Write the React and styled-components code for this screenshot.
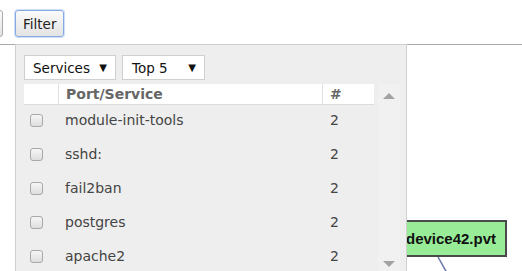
import React from "react";
import styled, { createGlobalStyle } from "styled-components";

const Global = createGlobalStyle`
  html, body { margin: 0; padding: 0; background: #fff; }
  body { font-family: "DejaVu Sans", Verdana, sans-serif; }
  * { box-sizing: border-box; }
`;

const Page = styled.div`
  position: relative;
  width: 522px;
  height: 271px;
  overflow: hidden;
`;

const Toolbar = styled.div`
  display: flex;
  align-items: flex-start;
  gap: 12px;
  height: 45px;
  padding-top: 10px;
  border-bottom: 1px solid #a9a9a9;
`;

const Button = styled.button`
  height: 27px;
  padding: 0 7px;
  font-family: "DejaVu Sans", Verdana, sans-serif;
  font-size: 13.5px;
  color: #222;
  border-radius: 3px;
  background: linear-gradient(#fbfbfb, #e3e3e3);
  border: 1px solid ${(p) => (p.$focused ? "#86a9e3" : "#a9a9a9")};
  box-shadow: ${(p) => (p.$focused ? "0 0 0 1px rgba(150,185,240,0.45)" : "none")};
  margin-left: ${(p) => (p.$clipped ? "-40px" : "0")};
  width: ${(p) => (p.$clipped ? "43px" : "auto")};
`;

const Canvas = styled.div`
  position: absolute;
  inset: 45px 0 0 0;
`;

const Node = styled.div`
  position: absolute;
  left: 395px;
  top: 175px;
  width: 112px;
  height: 37px;
  display: flex;
  align-items: center;
  justify-content: center;
  background: #98ec98;
  border: 2px solid #4a4a4a;
  font-family: "Liberation Sans", Arial, sans-serif;
  font-weight: bold;
  font-size: 15px;
  color: #111;
`;

const Edge = styled.svg`
  position: absolute;
  left: 430px;
  top: 212px;
`;

const Panel = styled.div`
  position: absolute;
  left: 15px;
  top: 44px;
  width: 392px;
  height: 240px;
  background: #eeeeee;
  border: 1px solid #cfcfcf;
  padding: 10px 8px 0;
  display: flex;
  flex-direction: column;
  gap: 4px;
`;

const Selects = styled.div`
  display: flex;
  gap: 6px;
`;

const Select = styled.div`
  width: ${(p) => p.$w}px;
  height: 25px;
  background: #fff;
  border: 1px solid #cfcfcf;
  display: flex;
  align-items: center;
  justify-content: space-between;
  padding: 0 8px 0 ${(p) => p.$pl}px;
  font-size: 13.5px;
  color: #111;
`;

const Caret = styled.span`
  font-size: 10px;
  color: #111;
`;

const TableWrap = styled.div`
  display: grid;
  grid-template-columns: 350px 22px;
  gap: 4px;
`;

const Table = styled.div`
  display: flex;
  flex-direction: column;
`;

const cols = "34px 264px 52px";

const Header = styled.div`
  display: grid;
  grid-template-columns: ${cols};
  height: 21px;
  background: #fff;
  border-bottom: 1px solid #dcdcdc;
`;

const HeadCell = styled.div`
  display: flex;
  align-items: center;
  padding-left: 7px;
  font-weight: bold;
  font-size: 14px;
  color: #666;
  border-left: ${(p) => (p.$first ? "none" : "1px solid #e2e2e2")};
`;

const Row = styled.div`
  display: grid;
  grid-template-columns: ${cols};
  height: 34px;
  align-items: center;
  padding-bottom: 4px;
`;

const Check = styled.span`
  width: 13px;
  height: 13px;
  margin-left: 6px;
  border: 1px solid #a8a8a8;
  border-radius: 3px;
  background: linear-gradient(#f6f6f6, #dedede);
`;

const Cell = styled.div`
  padding-left: ${(p) => p.$pl}px;
  font-size: 14px;
  color: #444;
`;

const Scrollbar = styled.div`
  background: #f1f1f1;
  height: 200px;
  position: relative;
`;

const Arrow = styled.span`
  position: absolute;
  left: 5px;
  ${(p) => (p.$down ? "top: 177px;" : "top: 9px;")}
  width: 0;
  height: 0;
  border-left: 6px solid transparent;
  border-right: 6px solid transparent;
  ${(p) =>
    p.$down ? "border-top: 6px solid #a3a3a3;" : "border-bottom: 6px solid #a3a3a3;"}
`;

const rows = ["module-init-tools", "sshd:", "fail2ban", "postgres", "apache2"];

export default function App() {
  return (
    <Page>
      <Global />
      <Toolbar>
        <Button $clipped> </Button>
        <Button $focused>Filter</Button>
      </Toolbar>
      <Canvas>
        <Edge width="30" height="30" viewBox="0 0 30 30">
          <line x1="8" y1="0" x2="17" y2="16" stroke="#6a78aa" strokeWidth="1.5" />
        </Edge>
        <Node>device42.pvt</Node>
      </Canvas>
      <Panel>
        <Selects>
          <Select $w={92} $pl={8}>
            Services <Caret>▼</Caret>
          </Select>
          <Select $w={83} $pl={9}>
            Top 5 <Caret>▼</Caret>
          </Select>
        </Selects>
        <TableWrap>
          <Table>
            <Header>
              <HeadCell $first />
              <HeadCell>Port/Service</HeadCell>
              <HeadCell>#</HeadCell>
            </Header>
            {rows.map((r) => (
              <Row key={r}>
                <Check />
                <Cell $pl={7}>{r}</Cell>
                <Cell $pl={8}>2</Cell>
              </Row>
            ))}
          </Table>
          <Scrollbar>
            <Arrow />
            <Arrow $down />
          </Scrollbar>
        </TableWrap>
      </Panel>
    </Page>
  );
}
